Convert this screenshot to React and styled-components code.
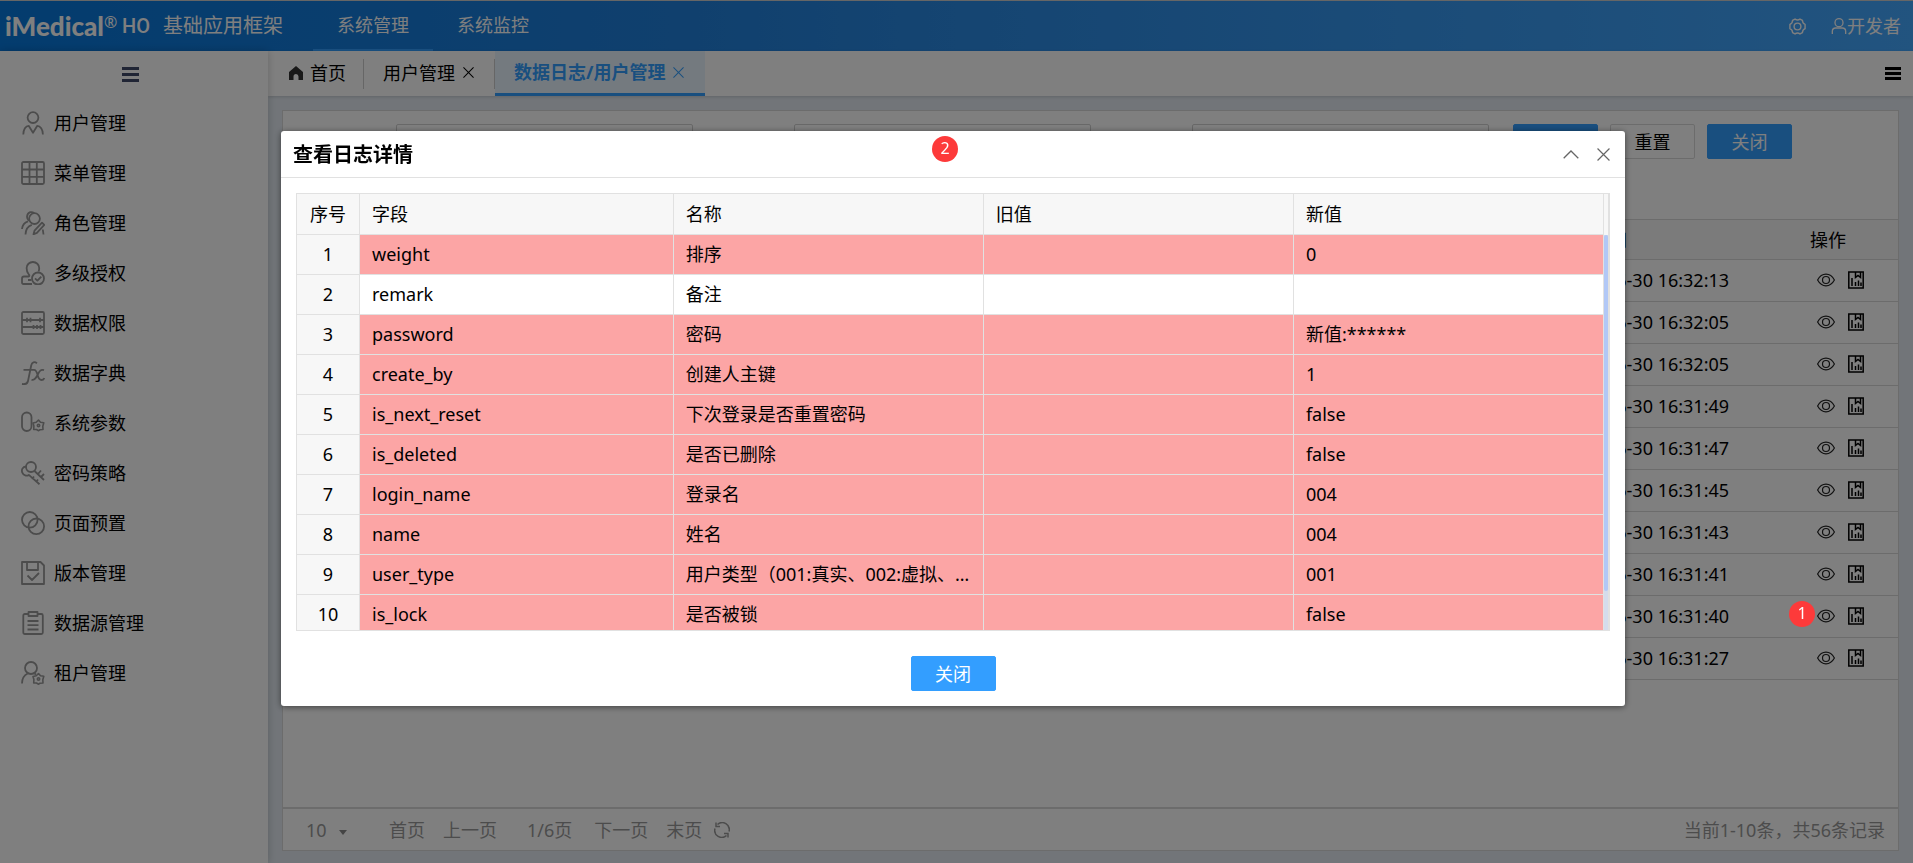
import React, { useState } from "react";
import styled, { createGlobalStyle } from "styled-components";

const GlobalStyle = createGlobalStyle`
    * {
        box-sizing: border-box;
    }
    body {
        margin: 0;
        font-family: "Noto Sans", "Noto Sans CJK SC", sans-serif;
        font-size: 18px;
        line-height: 24px;
        color: #000;
    }
    button, input, select {
        font: inherit;
        color: inherit;
    }
    a {
        color: inherit;
        text-decoration: none;
    }
    svg {
        display: block;
        flex: none;
    }
`;

const Page = styled.div`
    display: flex;
    flex-direction: column;
    min-height: 100vh;
`;

const Header = styled.header`
    display: flex;
    align-items: stretch;
    height: 51px;
    padding: 0 12px 0 5px;
    border-top: 1px solid #ccc;
    background: linear-gradient(90deg, #0778dd 0%, #2080dc 35%, #2a8ae4 50%, #44a8ff 100%);
    color: #fff;
`;

const Brand = styled.div`
    display: flex;
    align-items: center;
    width: 308px;
    white-space: nowrap;
`;

const Logo = styled.span`
    width: 99px;
    font-family: Lato, "Liberation Sans", sans-serif;
    font-size: 26px;
    font-weight: 900;
`;

const Registered = styled.sup`
    width: 18px;
    font-size: 16px;
    line-height: 18px;
    align-self: flex-start;
    padding-top: 12px;
`;

const Edition = styled.span`
    width: 41px;
    font-family: Roboto, "Liberation Sans", sans-serif;
    font-size: 20px;
    font-weight: 500;
`;

const Product = styled.span`
    font-size: 20px;
`;

const NavItem = styled.a`
    display: flex;
    align-items: center;
    justify-content: center;
    width: 120px;
    border-bottom: 2px solid ${({ $active }) => ($active ? "#339eff" : "transparent")};
`;

const HeaderTools = styled.div`
    display: flex;
    align-items: center;
    gap: 25px;
    margin-left: auto;
`;

const PlainButton = styled.button`
    display: flex;
    align-items: center;
    padding: 0;
    border: 0;
    background: none;
    cursor: pointer;
    white-space: nowrap;
`;

const Body = styled.div`
    display: flex;
    flex: 1;
`;

const Sidebar = styled.nav`
    position: relative;
    width: 268px;
    flex: none;
    background: #fff;
    box-shadow: 0 0 8px rgba(0, 0, 0, 0.2);
`;

const Collapse = styled(PlainButton)`
    justify-content: center;
    width: 100%;
    height: 47px;
    padding-right: 8px;
`;

const Menu = styled.ul`
    margin: 0;
    padding: 0;
    list-style: none;
`;

const MenuLink = styled.a`
    display: flex;
    align-items: center;
    gap: 9px;
    height: 50px;
    padding-left: 21px;
    svg {
        color: #999;
    }
`;

const Main = styled.main`
    display: flex;
    flex-direction: column;
    flex: 1;
    min-width: 0;
    background: #e4ebf2;
`;

const Tabs = styled.div`
    display: flex;
    align-items: center;
    height: 45px;
    padding-right: 12px;
    background: #fff;
    box-shadow: 0 1px 3px rgba(0, 0, 0, 0.15);
`;

const Tab = styled.div`
    display: flex;
    align-items: center;
    gap: ${({ $home }) => ($home ? "7px" : "8px")};
    height: 30px;
    padding: ${({ $home }) => ($home ? "0 17px 2px 21px" : "0 20px 2px 19px")};
    border-right: 1px solid #ccc;
    ${({ $active }) => $active && `
        height: 45px;
        padding: 0 21px 0 19px;
        border-right: 0;
        border-bottom: 3px solid #339eff;
        background: #e9f5ff;
        color: #339eff;
        font-weight: 700;
    `}
`;

const TabsMenu = styled(PlainButton)`
    margin-left: auto;
`;

const Content = styled.div`
    display: flex;
    flex: 1;
    padding: 14px 14px 12px;
`;

const Panel = styled.section`
    display: flex;
    flex-direction: column;
    flex: 1;
    min-width: 0;
    border: 1px solid #d9d9d9;
    background: #fff;
`;

const SearchForm = styled.form`
    display: flex;
    height: 108px;
    padding: 13px 0 0 12px;
`;

const SearchInput = styled.input`
    width: 297px;
    height: 35px;
    margin-left: 101px;
    padding: 0 10px;
    border: 1px solid #d0d0d0;
    border-radius: 2px;
    background: #fff;
`;

const FormActions = styled.div`
    display: flex;
    gap: 12px;
    margin-left: 24px;
`;

const Button = styled.button`
    width: 85px;
    height: 35px;
    padding: 0;
    border: 1px solid ${({ $plain }) => ($plain ? "#d9d9d9" : "#339eff")};
    border-radius: 2px;
    background: ${({ $plain }) => ($plain ? "#fff" : "#339eff")};
    color: ${({ $plain }) => ($plain ? "#000" : "#fff")};
    cursor: pointer;
`;

const LogTable = styled.table`
    width: 100%;
    table-layout: fixed;
    border-collapse: separate;
    border-spacing: 0;
    th, td {
        height: 42px;
        padding: 0 10px 2px;
        border-bottom: 1px solid #d9d9d9;
        font-weight: 400;
        text-align: left;
        white-space: nowrap;
    }
    thead th {
        height: 41px;
        padding-bottom: 0;
        border-top: 1px solid #d9d9d9;
        background: #f7f7f7;
    }
    th:nth-child(2) {
        padding-left: 6px;
    }
`;

const ActionCell = styled.td`
    position: relative;
`;

const RowActions = styled.div`
    display: flex;
    align-items: center;
    gap: 13px;
    padding-left: 7px;
`;

const Badge = styled.span`
    position: absolute;
    z-index: 20;
    top: ${({ $top }) => $top}px;
    left: ${({ $left }) => $left}px;
    width: 26px;
    height: 26px;
    border-radius: 50%;
    background: #fd3a3a;
    color: #fff;
    font-size: 16px;
    line-height: 24px;
    text-align: center;
`;

const Pager = styled.footer`
    display: flex;
    align-items: center;
    height: 43px;
    margin-top: auto;
    padding: 0 13px 0 23px;
    border-top: 2px solid #d9d9d9;
    color: #999;
`;

const PageSize = styled.label`
    display: flex;
    align-items: center;
    width: 83px;
    select {
        width: 32px;
        padding: 0;
        border: 0;
        background: none;
        appearance: none;
    }
`;

const PagerLinks = styled.div`
    display: flex;
    align-items: center;
    gap: 18px;
    margin-right: 12px;
`;

const PageNumber = styled.span`
    padding: 0 4px 0 12px;
`;

const Summary = styled.span`
    margin-left: auto;
`;

const Overlay = styled.div`
    position: fixed;
    inset: 0;
    z-index: 10;
    display: flex;
    align-items: flex-start;
    padding: 131px 288px 0 281px;
    background: rgba(0, 0, 0, 0.5);
`;

const Modal = styled.div`
    flex: 1;
    min-width: 0;
    border-radius: 3px;
    background: #fff;
    box-shadow: 0 1px 6px rgba(0, 0, 0, 0.5);
`;

const ModalHeader = styled.div`
    position: relative;
    display: flex;
    align-items: center;
    gap: 18px;
    height: 47px;
    padding: 0 15px 0 12px;
    border-bottom: 1px solid #e1e1e1;
    color: #666;
`;

const ModalTitle = styled.h2`
    margin: 0 auto 0 0;
    padding-top: 2px;
    color: #000;
    font-size: 20px;
    font-weight: 700;
`;

const ModalBody = styled.div`
    padding: 15px 15px 25px;
`;

const GridFrame = styled.div`
    display: flex;
    height: 438px;
    border: 1px solid #e1e1e1;
    border-right-width: 2px;
    overflow: hidden;
`;

const GridView = styled.div`
    flex: 1;
    min-width: 0;
`;

const FieldTable = styled.table`
    width: 100%;
    table-layout: fixed;
    border-collapse: separate;
    border-spacing: 0;
    th, td {
        height: 40px;
        padding: 0 12px 2px;
        border-right: 1px solid #e1e1e1;
        border-bottom: 1px solid #e1e1e1;
        font-weight: 400;
        text-align: left;
        white-space: nowrap;
        overflow: hidden;
        text-overflow: ellipsis;
    }
    thead th {
        height: 41px;
        padding-bottom: 0;
        background: #f7f7f7;
    }
    th:first-child {
        padding-left: 0;
        padding-right: 0;
        background: #f7f7f7;
        text-align: center;
    }
`;

const FieldRow = styled.tr`
    background: ${({ $changed }) => ($changed ? "#fca5a5" : "#fff")};
`;

const ScrollGutter = styled.div`
    width: 4px;
    padding-top: 41px;
    background: #f7f7f7;
`;

const ScrollTrack = styled.div`
    height: 100%;
    background: #d5dcec;
`;

const ScrollThumb = styled.div`
    height: 90%;
    border-radius: 2px;
    background: #b2c8f6;
`;

const ModalFooter = styled.div`
    display: flex;
    justify-content: center;
    padding-bottom: 15px;
`;

function Icon({ size = 24, width = 1.8, children }) {
  return (
    <svg width={size} height={size} viewBox="0 0 24 24" fill="none" stroke="currentColor" strokeWidth={width} strokeLinejoin="round" aria-hidden="true">
      {children}
    </svg>
  );
}

function Gear({ x, y }) {
  return (
    <g transform={`translate(${x} ${y})`} strokeWidth="1.6">
      <path d="M0-5.500L2-3.200 5.300-2.800 4.300.8 4.500 4 1.500 4.300-.2 5.200-2 4-4.800 4-4.600.5-5.500-2.500-2.300-3.200z" />
      <circle r="1.200" />
    </g>
  );
}

const menuIcons = {
  user: <><circle cx="12" cy="6.600" r="5.400" /><path d="M2.300 23.500c0-5 2.400-8.700 5.400-8.700L12 21.800l4.300-7c3 0 5.600 3.700 5.600 8.700" /></>,
  grid: <><rect x="1" y="1" width="22" height="22" rx="1.500" /><path d="M1 8.500h22M1 15.800h22M8.500 1v22M15.800 1v22" /></>,
  role: <><circle cx="13.500" cy="7.600" r="5.400" /><path d="M8 9.800A5 5 0 0 1 9.200 1.200c1.500-.3 3 .1 4 .9M1 18c.4-4 2.500-6.700 6-7.700M4.500 23.500c.2-5 2.500-8.300 6.300-9.600M12.500 23.300l1-3.600 7.500-8 2.300 2.200-7.400 8zM22.500 23.500l-.7-5" /></>,
  auth: <><path d="M11 23H2.500c-1 0-1.500-.6-1.500-1.500v-3.800c0-1.400.8-2.200 2-2.200h4.500c1 0 1.300-1 .3-2C6 11.500 5.600 9.500 5.600 7a6.300 6 0 0 1 12.600 0c0 1.500-.2 2.500-.6 3.500M7 19h3.500" /><circle cx="17" cy="17.500" r="6" /><path d="M14 17.300l2.400 2.300 3.900-4" /></>,
  abacus: <><rect x="1" y="1" width="22" height="22" rx="1.500" /><path d="M1 9h22M1 16h22M6 6.800v4.400M9.500 6.800v4.400M19 6.800v4.400M12.500 14v4M16 14v4M19.500 14v4" /></>,
  fx: <><path d="M16 2.300C13.500.3 11 .9 10.200 4.500L7 20c-.6 2.800-2.500 3.600-6 3M2.500 8.800h10.500c2.200 0 2.800 2 3.500 5 .8 3 1.500 5.200 4 5.200 1.500 0 2.300-.7 2.800-2M23 9.200c-3.200-1.200-4.500.8-6.200 4.300-1.500 3-3 6.200-6.300 5.300" /></>,
  param: <><rect x="1" y="1.500" width="9.500" height="18.500" rx="4.700" /><Gear x={17.5} y={14.5} /></>,
  key: <><circle cx="10" cy="6" r="5" /><path d="M5 5.500c-3.500.3-4.800 3.500-3.700 6.200 1.300 3 4.300 3.600 6.500 2.200l10.700 9.300M11 18l2-2.500M15 21l2-2.500M13.500 10l9.500 9M17 13l3-3.500M20 16l3-3" /></>,
  rings: <><circle cx="8.800" cy="8.800" r="7.800" /><circle cx="15.300" cy="15.300" r="7.800" /></>,
  save: <><path d="M1 1h18.500L23 4.500V23H1zM6 1v8h11V1M6.500 14.500l4.500 4.500 7-7" /></>,
  clip: <><rect x="2.300" y="3" width="19.500" height="20" rx="1.500" /><path d="M7.500 1h9v4h-9z" fill="#fff" /><path d="M6.500 10h11M6.500 14.200h11M6.500 18.500h11" /></>,
  tenant: <><circle cx="10" cy="7" r="6" /><path d="M1 22.500c0-4.500 2.200-8.300 5.700-10M13.500 12.500l1.500 1" /><Gear x={17.5} y={18} /></>,
};

const menu = [
  ["用户管理", "user"],
  ["菜单管理", "grid"],
  ["角色管理", "role"],
  ["多级授权", "auth"],
  ["数据权限", "abacus"],
  ["数据字典", "fx"],
  ["系统参数", "param"],
  ["密码策略", "key"],
  ["页面预置", "rings"],
  ["版本管理", "save"],
  ["数据源管理", "clip"],
  ["租户管理", "tenant"],
];

const logTimes = ["16:32:13", "16:32:05", "16:32:05", "16:31:49", "16:31:47", "16:31:45", "16:31:43", "16:31:41", "16:31:40", "16:31:27"];

const fields = [
  { field: "weight", name: "排序", value: "0", changed: true },
  { field: "remark", name: "备注", value: "", changed: false },
  { field: "password", name: "密码", value: "新值:******", changed: true },
  { field: "create_by", name: "创建人主键", value: "1", changed: true },
  { field: "is_next_reset", name: "下次登录是否重置密码", value: "false", changed: true },
  { field: "is_deleted", name: "是否已删除", value: "false", changed: true },
  { field: "login_name", name: "登录名", value: "004", changed: true },
  { field: "name", name: "姓名", value: "004", changed: true },
  { field: "user_type", name: "用户类型（001:真实、002:虚拟、003:其他）", value: "001", changed: true },
  { field: "is_lock", name: "是否被锁", value: "false", changed: true },
];

function Burger({ w, h, thick, color }) {
  return (
    <svg width={w} height={h} fill={color} aria-hidden="true">
      <rect width={w} height={thick} />
      <rect y={(h - thick) / 2} width={w} height={thick} />
      <rect y={h - thick} width={w} height={thick} />
    </svg>
  );
}

function CloseIcon({ size = 11 }) {
  return (
    <svg width={size} height={size} viewBox="0 0 12 12" fill="none" stroke="currentColor" strokeWidth="1.1" aria-hidden="true">
      <path d="M.5.5l11 11M11.500.5l-11 11" />
    </svg>
  );
}

function TopBar() {
  return (
    <Header>
      <Brand>
        <Logo>iMedical</Logo>
        <Registered>®</Registered>
        <Edition>HO</Edition>
        <Product>基础应用框架</Product>
      </Brand>
      <NavItem href="#manage" $active>系统管理</NavItem>
      <NavItem href="#monitor">系统监控</NavItem>
      <HeaderTools>
        <PlainButton aria-label="设置">
          <Icon size={17} width={2}>
            <path d="M8.500 1.500Q12 4 15.500 1.500L19 3.500Q19 7.500 22.700 9V15Q19 16.500 19 20.500L15.500 22.500Q12 20 8.500 22.500L5 20.500Q5 16.500 1.300 15V9Q5 7.500 5 3.500z" />
            <circle cx="12" cy="12" r="4.800" />
          </Icon>
        </PlainButton>
        <PlainButton>
          <Icon size={16} width={2}>
            <circle cx="12" cy="7" r="6" />
            <path d="M2 24v-4c0-3 2-5 5-5h10c3 0 5 2 5 5v4" />
          </Icon>
          开发者
        </PlainButton>
      </HeaderTools>
    </Header>
  );
}

function SideMenu() {
  return (
    <Sidebar>
      <Collapse aria-label="收起菜单"><Burger w={17} h={15} thick={3} color="#404a6b" /></Collapse>
      <Menu>
        {menu.map(([label, icon]) => (
          <li key={icon}>
            <MenuLink href={`#${icon}`}>
              <Icon>{menuIcons[icon]}</Icon>
              {label}
            </MenuLink>
          </li>
        ))}
      </Menu>
    </Sidebar>
  );
}

function TabBar() {
  return (
    <Tabs>
      <Tab $home>
        <svg width="14" height="14" viewBox="0 0 14 14" fill="#333" aria-hidden="true">
          <path d="M7 0l7 6v8H9.500v-3.500a2.500 2.500 0 0 0-5 0V14H0V6z" />
        </svg>
        首页
      </Tab>
      <Tab>
        用户管理
        <PlainButton aria-label="关闭用户管理"><CloseIcon /></PlainButton>
      </Tab>
      <Tab $active>
        数据日志/用户管理
        <PlainButton aria-label="关闭数据日志"><CloseIcon /></PlainButton>
      </Tab>
      <TabsMenu aria-label="标签菜单"><Burger w={16} h={13} thick={3} color="#000" /></TabsMenu>
    </Tabs>
  );
}

function LogPanel() {
  return (
    <Panel>
      <SearchForm>
        <SearchInput aria-label="用户" />
        <SearchInput aria-label="开始日期" />
        <SearchInput aria-label="结束日期" />
        <FormActions>
          <Button type="button">查询</Button>
          <Button type="button" $plain>重置</Button>
          <Button type="button">关闭</Button>
        </FormActions>
      </SearchForm>
      <LogTable>
        <colgroup>
          <col />
          <col style={{ width: 251 }} />
          <col style={{ width: 98 }} />
        </colgroup>
        <thead>
          <tr><th></th><th>操作时间</th><th>操作</th></tr>
        </thead>
        <tbody>
          {logTimes.map((time, i) => (
            <tr key={i}>
              <td></td>
              <td>2023-06-30 {time}</td>
              <ActionCell>
                {i === 8 && <Badge $top={5} $left={-11}>1</Badge>}
                <RowActions>
                  <PlainButton aria-label="查看">
                    <svg width="18" height="14" viewBox="0 0 18 14" fill="none" stroke="#222" strokeWidth="1.200" aria-hidden="true">
                      <path d="M.6 7C2.500 3.500 5.500 1.200 9 1.200S15.500 3.500 17.400 7c-1.900 3.500-4.900 5.800-8.400 5.800S2.500 10.500.6 7z" />
                      <circle cx="9" cy="7" r="3.500" />
                    </svg>
                  </PlainButton>
                  <PlainButton aria-label="统计">
                    <svg width="16" height="18" viewBox="0 0 16 18" fill="none" stroke="#000" strokeWidth="1.500" aria-hidden="true">
                      <rect x=".8" y="1" width="14.400" height="16" />
                      <path d="M7.500 1v5.500l2.500-2 2.500 2V1M4 7v8M7.500 11v4M10.500 9.500V15M13 11.500V15" />
                    </svg>
                  </PlainButton>
                </RowActions>
              </ActionCell>
            </tr>
          ))}
        </tbody>
      </LogTable>
      <Pager>
        <PageSize>
          <select aria-label="每页条数" defaultValue="10">
            <option>10</option>
            <option>20</option>
            <option>50</option>
          </select>
          <svg width="10" height="12" viewBox="0 0 10 12" fill="#888" aria-hidden="true"><path d="M1 6h8l-4 5z" /></svg>
        </PageSize>
        <PagerLinks>
          <PlainButton>首页</PlainButton>
          <PlainButton>上一页</PlainButton>
          <PageNumber>1/6页</PageNumber>
          <PlainButton>下一页</PlainButton>
          <PlainButton>末页</PlainButton>
        </PagerLinks>
        <PlainButton aria-label="刷新">
          <svg width="16" height="16" viewBox="0 0 16 16" fill="none" stroke="currentColor" strokeWidth="1.500" aria-hidden="true">
            <path d="M3.500 2.500A7 7 0 0 1 15 9.500M12.500 13.500A7 7 0 0 1 1 6.500" />
            <path d="M2 .5v4h4M14 15.500v-4h-4" />
          </svg>
        </PlainButton>
        <Summary>当前1-10条，共56条记录</Summary>
      </Pager>
    </Panel>
  );
}

function LogDetail({ onClose }) {
  return (
    <Overlay>
      <Modal role="dialog" aria-labelledby="detail-title">
        <ModalHeader>
          <ModalTitle id="detail-title">查看日志详情</ModalTitle>
          <Badge $top={5} $left={651}>2</Badge>
          <PlainButton aria-label="收起">
            <svg width="16" height="9" viewBox="0 0 16 9" fill="none" stroke="currentColor" strokeWidth="1.300" aria-hidden="true">
              <path d="M.7 8.300L8 1l7.300 7.300" />
            </svg>
          </PlainButton>
          <PlainButton aria-label="关闭窗口" onClick={onClose}><CloseIcon size={13} /></PlainButton>
        </ModalHeader>
        <ModalBody>
          <GridFrame>
            <GridView>
              <FieldTable>
                <colgroup>
                  <col style={{ width: 63 }} />
                  <col style={{ width: "24%" }} />
                  <col />
                  <col />
                  <col />
                </colgroup>
                <thead>
                  <tr><th>序号</th><th>字段</th><th>名称</th><th>旧值</th><th>新值</th></tr>
                </thead>
                <tbody>
                  {fields.map((row, i) => (
                    <FieldRow key={row.field} $changed={row.changed}>
                      <th scope="row">{i + 1}</th>
                      <td>{row.field}</td>
                      <td>{row.name}</td>
                      <td></td>
                      <td>{row.value}</td>
                    </FieldRow>
                  ))}
                </tbody>
              </FieldTable>
            </GridView>
            <ScrollGutter>
              <ScrollTrack><ScrollThumb /></ScrollTrack>
            </ScrollGutter>
          </GridFrame>
        </ModalBody>
        <ModalFooter>
          <Button type="button" onClick={onClose}>关闭</Button>
        </ModalFooter>
      </Modal>
    </Overlay>
  );
}

export default function App() {
  const [open, setOpen] = useState(true);

  return (
    <>
      <GlobalStyle />
      <Page>
        <TopBar />
        <Body>
          <SideMenu />
          <Main>
            <TabBar />
            <Content>
              <LogPanel />
            </Content>
          </Main>
        </Body>
      </Page>
      {open && <LogDetail onClose={() => setOpen(false)} />}
    </>
  );
}
